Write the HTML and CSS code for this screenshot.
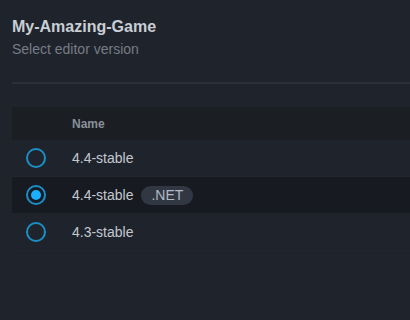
FILE: index.html
```html
<!DOCTYPE html>
<html>
<head>
<meta charset="utf-8">
<link rel="stylesheet" href="styles.css">
</head>
<body>
<div class="page">
  <div class="head">
    <div class="title">My-Amazing-Game</div>
    <div class="subtitle">Select editor version</div>
  </div>
  <div class="divider"></div>
  <div class="table">
    <div class="row header">
      <div class="cell-radio"></div>
      <div class="cell-name">Name</div>
    </div>
    <div class="row">
      <div class="cell-radio"><span class="radio"></span></div>
      <div class="cell-name">4.4-stable</div>
    </div>
    <div class="row selected">
      <div class="cell-radio"><span class="radio checked"></span></div>
      <div class="cell-name">4.4-stable <span class="badge">.NET</span></div>
    </div>
    <div class="row">
      <div class="cell-radio"><span class="radio"></span></div>
      <div class="cell-name">4.3-stable</div>
    </div>
  </div>
</div>
</body>
</html>
```

FILE: styles.css
```css
html, body {
  margin: 0;
  padding: 0;
  background: #1f242c;
  font-family: "Liberation Sans", Arial, sans-serif;
}
.page {
  padding: 17px 0 0 12px;
  height: 320px;
  box-sizing: border-box;
}
.title {
  font-size: 16px;
  line-height: 20px;
  font-weight: bold;
  color: #c9ced5;
}
.subtitle {
  margin-top: 3px;
  font-size: 14px;
  line-height: 18px;
  color: #767c86;
}
.divider {
  margin-top: 24px;
  height: 2px;
  background: #2b3038;
}
.table {
  margin-top: 23px;
}
.row {
  display: flex;
  align-items: center;
  height: 36px;
  border-bottom: 1px solid #22272e;
  color: #c3c8cf;
  font-size: 14px;
}
.row.header {
  height: 33px;
  border-bottom: none;
  background: #1b1e23;
  font-size: 12px;
  font-weight: bold;
  color: #8a909a;
}
.row.selected {
  background: #171a21;
  border-bottom-color: #1f242c;
}
.cell-radio {
  width: 60px;
  padding-left: 14px;
  box-sizing: border-box;
  display: flex;
  align-items: center;
}
.cell-name {
  display: flex;
  align-items: center;
}
.radio {
  width: 20px;
  height: 20px;
  box-sizing: border-box;
  border: 2px solid #1b8ec6;
  border-radius: 50%;
  display: flex;
  align-items: center;
  justify-content: center;
}
.radio.checked::after {
  content: "";
  width: 10px;
  height: 10px;
  border-radius: 50%;
  background: #1ab0ff;
}
.badge {
  margin-left: 8px;
  height: 19px;
  line-height: 19px;
  padding: 0 10px;
  border-radius: 10px;
  background: #313843;
  color: #b3bac3;
  font-size: 14px;
}
```
